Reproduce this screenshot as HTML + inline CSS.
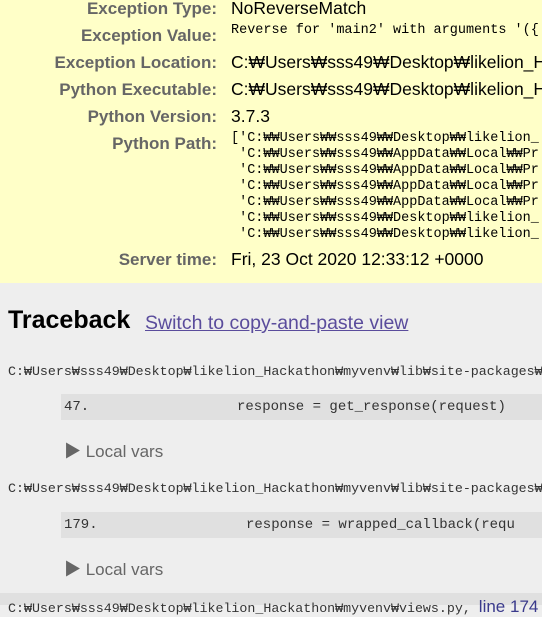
<html><head><style>
body{margin:0;width:542px;height:605px;overflow:hidden;background:#eee;position:relative;font-family:"Liberation Sans","Noto Sans CJK KR",sans-serif}
.y{position:absolute;left:0;top:0;width:542px;height:283px;background:#ffffc8}
.a{position:absolute;white-space:nowrap}
.l{right:325px;font-weight:bold;color:#666;font-size:17px}
.v{left:231px;font-size:17.5px;color:#000}
.m{font-family:"Liberation Mono","Noto Sans CJK KR",monospace;font-size:13.5px;color:#000}
.box{position:absolute;left:61px;width:481px;height:26px;background:#e0e0e0}
.c{font-size:14px}
</style></head><body>
<div class="y"></div>
<div class="a l" style="top:-1px">Exception Type:</div><div class="a v" style="top:-2px">NoReverseMatch</div>
<div class="a l" style="top:26px">Exception Value:</div><div class="a v m" style="top:23px;left:231px;font-size:13.5px">Reverse for 'main2' with arguments '({</div>
<div class="a l" style="top:53px">Exception Location:</div><div class="a v" style="top:52px">C:₩Users₩sss49₩Desktop₩likelion_Ha</div>
<div class="a l" style="top:80px">Python Executable:</div><div class="a v" style="top:79px">C:₩Users₩sss49₩Desktop₩likelion_Ha</div>
<div class="a l" style="top:107px">Python Version:</div><div class="a v" style="top:106px">3.7.3</div>
<div class="a l" style="top:134px">Python Path:</div>
<div class="a m" style="left:231px;top:131px;line-height:16px">['C:₩₩Users₩₩sss49₩₩Desktop₩₩likelion_<br>&nbsp;'C:₩₩Users₩₩sss49₩₩AppData₩₩Local₩₩Pr<br>&nbsp;'C:₩₩Users₩₩sss49₩₩AppData₩₩Local₩₩Pr<br>&nbsp;'C:₩₩Users₩₩sss49₩₩AppData₩₩Local₩₩Pr<br>&nbsp;'C:₩₩Users₩₩sss49₩₩AppData₩₩Local₩₩Pr<br>&nbsp;'C:₩₩Users₩₩sss49₩₩Desktop₩₩likelion_<br>&nbsp;'C:₩₩Users₩₩sss49₩₩Desktop₩₩likelion_</div>
<div class="a l" style="top:250px">Server time:</div><div class="a v" style="top:249px">Fri, 23 Oct 2020 12:33:12 +0000</div>
<div class="a" style="left:8px;top:306px;font-size:25px;font-weight:bold;color:#000">Traceback</div>
<div class="a" style="left:145px;top:312px;font-size:19.5px;color:#5a4c9c;text-decoration:underline">Switch to copy-and-paste view</div>
<div class="a m" style="left:8px;top:364px;font-size:13.3px;color:#333">C:₩Users₩sss49₩Desktop₩likelion_Hackathon₩myvenv₩lib₩site-packages₩</div>
<div class="box" style="top:394px"></div>
<div class="a m c" style="left:64px;top:399px;color:#333">47.</div><div class="a m c" style="left:237px;top:399px;color:#333">response = get_response(request)</div>
<div class="a" style="left:64px;top:437px;font-size:17px;color:#666">▶ Local vars</div>
<div class="a m" style="left:8px;top:481px;font-size:13.3px;color:#333">C:₩Users₩sss49₩Desktop₩likelion_Hackathon₩myvenv₩lib₩site-packages₩</div>
<div class="box" style="top:512px"></div>
<div class="a m c" style="left:64px;top:517px;color:#333">179.</div><div class="a m c" style="left:246px;top:517px;color:#333">response = wrapped_callback(requ</div>
<div class="a" style="left:64px;top:555px;font-size:17px;color:#666">▶ Local vars</div>
<div class="box" style="top:593px;left:0;width:542px;height:12px"></div>
<div class="a m" style="left:8px;top:597px;font-size:13.3px;color:#333">C:₩Users₩sss49₩Desktop₩likelion_Hackathon₩myvenv₩views.py, <span style="font-family:'Liberation Sans';color:#3a3a8c;font-size:17px">line 174</span></div>
</body></html>
